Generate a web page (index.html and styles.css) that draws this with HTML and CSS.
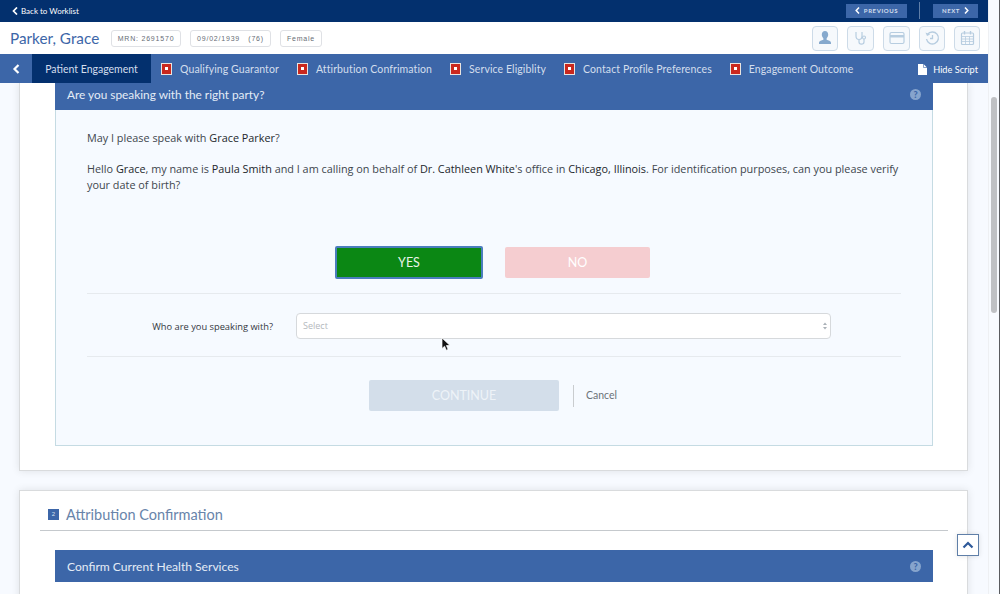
FILE: index.html
```html
<!DOCTYPE html>
<html>
<head>
	<title>Parker, Grace</title>
	<meta charset="UTF-8">
	<link rel="stylesheet" href="styles.css">
</head>
<body>
<div class="window">
	<div class="app">
		<div class="topbar">
			<a class="back"><svg width="6" height="8" viewBox="0 0 6 8"><path d="M5 .5 1.500 4 5 7.500" fill="none" stroke="#fff" stroke-width="1.700"/></svg>Back to Worklist</a>
			<div class="pager">
				<a class="pager-btn prev"><svg width="5" height="7" viewBox="0 0 5 7"><path d="M4 .5 1.200 3.500 4 6.500" fill="none" stroke="#fff" stroke-width="1.500"/></svg>PREVIOUS</a>
				<span class="pager-sep"></span>
				<a class="pager-btn next">NEXT<svg width="5" height="7" viewBox="0 0 5 7"><path d="M1 .5 3.800 3.500 1 6.500" fill="none" stroke="#fff" stroke-width="1.500"/></svg></a>
			</div>
		</div>

		<div class="patient">
			<h1>Parker, Grace</h1>
			<span class="tag tag-mrn">MRN: 2691570</span>
			<span class="tag tag-dob">09/02/1939 &nbsp; (76)</span>
			<span class="tag tag-sex">Female</span>
			<div class="tools">
				<a class="tool tool-a"><svg width="16" height="16" viewBox="0 0 16 16"><path d="M8 1c2 0 3.200 1.500 3.200 3.600 0 1.700-.8 3-1.600 3.800v1.300c1.700.6 4.400 1.200 4.400 3v1.300H2v-1.300c0-1.800 2.700-2.400 4.400-3V8.400C5.600 7.600 4.800 6.300 4.800 4.600 4.800 2.500 6 1 8 1z" fill="#86a9cd"/></svg></a>
				<a class="tool tool-b"><svg width="16" height="16" viewBox="0 0 16 16"><path d="M3 2v4c0 2.300 1.500 3.500 3 3.500S9 8.300 9 6V2M6 9.500V12c0 1.400 1 2.200 2.400 2.200s2.600-.8 2.600-2.200V9" fill="none" stroke="#b7cde0" stroke-width="1.200"/><circle cx="11" cy="7.500" r="1.500" fill="none" stroke="#b7cde0" stroke-width="1.100"/></svg></a>
				<a class="tool tool-c"><svg width="16" height="14" viewBox="0 0 16 14"><rect x="1" y="1.500" width="14" height="11" rx="1.500" fill="none" stroke="#b7cde0" stroke-width="1.200"/><rect x="1" y="4" width="14" height="2.500" fill="#b7cde0"/></svg></a>
				<a class="tool tool-d"><svg width="16" height="16" viewBox="0 0 16 16"><path d="M3.500 4.500A6 6 0 1 1 2.500 9" fill="none" stroke="#b7cde0" stroke-width="1.400"/><path d="M1.500 2.500 3 6l3.200-1.400z" fill="#b7cde0"/><path d="M8.500 5v3.500H6" fill="none" stroke="#b7cde0" stroke-width="1.300"/></svg></a>
				<a class="tool tool-e"><svg width="15" height="16" viewBox="0 0 15 16"><rect x="1.500" y="3" width="12" height="11.500" rx="1" fill="none" stroke="#b7cde0" stroke-width="1.200"/><path d="M4.500 1v3.500M10.500 1v3.500" stroke="#b7cde0" stroke-width="1.400"/><path d="M1.500 6.500h12M1.500 9h12M1.500 11.500h12M5.500 6.500v8M9.500 6.500v8" stroke="#b7cde0" stroke-width=".8"/></svg></a>
			</div>
		</div>

		<nav class="steps">
			<a class="steps-toggle"><svg width="8" height="10" viewBox="0 0 8 10"><path d="M6.500 1 2.500 5l4 4" fill="none" stroke="#fff" stroke-width="2.200"/></svg></a>
			<a class="step active">Patient Engagement</a>
			<a class="step"><i class="flag"></i>Qualifying Guarantor</a>
			<a class="step"><i class="flag"></i>Attirbution Confrimation</a>
			<a class="step"><i class="flag"></i>Service Eligiblity</a>
			<a class="step"><i class="flag"></i>Contact Profile Preferences</a>
			<a class="step"><i class="flag"></i>Engagement Outcome</a>
			<a class="hide-script"><svg width="9" height="11" viewBox="0 0 9 11"><path d="M0 0h5.500L9 3.500V11H0z" fill="#fff"/><path d="M5.500 0v3.500H9" fill="none" stroke="#3c66a8" stroke-width=".6"/></svg>Hide Script</a>
		</nav>

		<div class="content">
			<section class="card card-first">
				<div class="panel">
					<div class="panel-head">
						<span>Are you speaking with the right party?</span>
						<i class="help">?</i>
					</div>
					<div class="panel-body">
						<p>May I please speak with <b>Grace Parker</b>?</p>
						<p>Hello <b>Grace</b>, my name is <b>Paula Smith</b> and I am calling on behalf of <b>Dr. Cathleen White</b>'s office in <b>Chicago, Illinois</b>. For identification purposes, can you please verify your date of birth?</p>
						<div class="answers">
							<button class="btn btn-yes">YES</button>
							<button class="btn btn-no">NO</button>
						</div>
						<div class="who">
							<label>Who are you speaking with?</label>
							<div class="select">
								<span>Select</span>
								<svg width="4" height="8" viewBox="0 0 5 9"><path d="M2.500 0 5 3.400H0zM2.500 9 0 5.600h5z" fill="#aab1b8"/></svg>
							</div>
						</div>
						<div class="actions">
							<button class="btn btn-continue">CONTINUE</button>
							<span class="actions-sep"></span>
							<a class="cancel">Cancel</a>
						</div>
					</div>
				</div>
			</section>

			<section class="card card-second">
				<div class="section-title">
					<i class="num">2</i>
					<h2>Attribution Confirmation</h2>
				</div>
				<div class="panel-head">
					<span>Confirm Current Health Services</span>
					<i class="help">?</i>
				</div>
			</section>

			<a class="to-top"><svg width="12" height="8" viewBox="0 0 12 8"><path d="M1.500 6.500 6 2l4.500 4.500" fill="none" stroke="#2f5a9a" stroke-width="2.200"/></svg></a>
		</div>
	</div>
	<div class="scrollbar"><div class="thumb"></div></div>
</div>

<svg class="cursor" width="10" height="15" viewBox="0 0 10 15"><path d="M1 1v10.500l2.600-2.300 1.700 4 1.800-.8-1.700-3.900H9z" fill="#111" stroke="#fff" stroke-width=".7"/></svg>
</body>
</html>
```

FILE: styles.css
```css
* {
	box-sizing: border-box;
}

body {
	margin: 0;
	height: 594px;
	overflow: hidden;
	position: relative;
	font-family: "Lato", sans-serif;
	background-color: #f7faff;
}

.window {
	display: flex;
	height: 594px;
}

.app {
	width: 988px;
	display: flex;
	flex-direction: column;
}

/* Top bar */
.topbar {
	height: 22px;
	flex: none;
	background-color: #03306e;
	display: flex;
	align-items: center;
	justify-content: space-between;
	padding: 0 10px 1px 12px;
}

.back {
	color: #fff;
	font-size: 8px;
	display: flex;
	align-items: center;
	gap: 3px;
}

.pager {
	display: flex;
	align-items: center;
}

.pager-btn {
	height: 14px;
	background-color: #3c66a8;
	color: #d3deed;
	font-size: 6px;
	font-weight: 700;
	letter-spacing: .6px;
	display: flex;
	align-items: center;
	justify-content: center;
	gap: 4px;
}

.prev {
	width: 61px;
}

.next {
	width: 45px;
}

.pager-sep {
	width: 1px;
	height: 17px;
	background-color: #5f7ea8;
	margin: 0 13px 0 12px;
}

/* Patient header */
.patient {
	height: 32px;
	flex: none;
	background-color: #fff;
	display: flex;
	align-items: center;
	padding: 0 8px 0 10px;
}

.patient h1 {
	margin: 0 11px 0 0;
	font-size: 15.300px;
	font-weight: 400;
	color: #3c66a8;
	white-space: nowrap;
	width: 90px;
}

.tag {
	height: 17px;
	border: 1px solid #dfe1e5;
	border-radius: 3px;
	font-family: "Liberation Sans", sans-serif;
	font-size: 7px;
	letter-spacing: .8px;
	color: #666d75;
	display: flex;
	align-items: center;
	justify-content: center;
	margin-right: 9px;
	white-space: nowrap;
}

.tag-mrn {
	width: 70px;
}

.tag-dob {
	width: 81px;
}

.tag-sex {
	width: 42px;
}

.tools {
	margin-left: auto;
	display: flex;
	gap: 9px;
}

.tool {
	width: 26px;
	height: 25px;
	border: 1px solid #cddbe8;
	border-radius: 4px;
	background-color: #f6f9fc;
	display: flex;
	align-items: center;
	justify-content: center;
}

.tool-b,
.tool-c {
	width: 27px;
}

/* Step nav */
.steps {
	height: 29px;
	flex: none;
	background-color: #3c66a8;
	display: flex;
	align-items: stretch;
	color: #d3deed;
	font-size: 10.500px;
	letter-spacing: .1px;
}

.steps-toggle {
	width: 32px;
	display: flex;
	align-items: center;
	justify-content: center;
}

.step {
	display: flex;
	align-items: center;
	white-space: nowrap;
	margin-right: 18px;
}

.step.active {
	width: 119px;
	background-color: #03306e;
	justify-content: center;
	margin-right: 10px;
	letter-spacing: 0;
}

.flag {
	width: 11px;
	height: 12px;
	background-color: #c9281e;
	border: 1px solid #e9e4e0;
	margin-right: 8px;
	position: relative;
	flex: none;
}

.flag::after {
	content: "";
	position: absolute;
	left: 3px;
	top: 3.500px;
	width: 3px;
	height: 3px;
	background-color: #fff;
}

.hide-script {
	margin-left: auto;
	padding: 1px 10px 0 0;
	display: flex;
	align-items: center;
	gap: 6px;
	color: #fff;
	font-size: 9.200px;
	letter-spacing: 0;
}

/* Content */
.content {
	flex: 1;
	padding: 0 20px 0 19px;
	position: relative;
	overflow: hidden;
}

.card {
	background-color: #fff;
	border: 1px solid #d9dbdd;
	box-shadow: 0 0 8px rgba(0, 0, 0, .1);
	padding: 0 34px 0 35px;
}

.card-first {
	border-top: none;
	height: 388px;
}

.card-second {
	margin-top: 19px;
	height: 140px;
}

.panel {
	height: 363px;
	border: 1px solid #c5dbe3;
	border-top: none;
	background-color: #f6faff;
}

.panel-head {
	height: 32px;
	background-color: #3c66a8;
	color: #e4ecf6;
	font-size: 12.100px;
	display: flex;
	align-items: center;
	justify-content: space-between;
	padding: 0 12px;
}

.panel > .panel-head {
	height: 27px;
	margin: 0 -1px;
	padding-bottom: 4px;
	font-size: 11.850px;
}

.help {
	width: 11px;
	height: 11px;
	border-radius: 50%;
	background-color: #86a4cd;
	color: #3c66a8;
	font-size: 9px;
	font-style: normal;
	font-weight: 900;
	line-height: 11px;
	text-align: center;
}

.panel-body {
	padding: 20px 31px 0;
	font-family: "Open Sans", sans-serif;
	font-size: 10.850px;
	line-height: 16px;
	color: #40464d;
}

.panel-body p {
	margin: 0 0 15px;
}

.panel-body b {
	font-weight: 500;
	color: #23272b;
}

.answers {
	margin-top: 53px;
	padding: 0 0 14px 248px;
	display: flex;
	align-items: center;
	gap: 22px;
	border-bottom: 1px solid #e6eaee;
}

.btn {
	border: none;
	border-radius: 2px;
	font-family: "Lato", sans-serif;
	font-size: 12.500px;
	color: #fff;
	padding: 0;
}

.btn-yes {
	width: 148px;
	height: 33px;
	background-color: #0b8714;
	border: 2px solid #4a7dbd;
	color: #e8f3e8;
}

.btn-no {
	width: 145px;
	height: 31px;
	background-color: #f5cdd0;
}

.who {
	height: 63px;
	padding-top: 2px;
	display: flex;
	align-items: center;
	border-bottom: 1px solid #e6eaee;
}

.who label {
	width: 186px;
	text-align: right;
	font-size: 9.300px;
	font-weight: 500;
	color: #33383e;
	margin-top: 1px;
}

.select {
	width: 535px;
	height: 26px;
	margin-left: 23px;
	background-color: #fff;
	border: 1px solid #d6d9dc;
	border-radius: 4px;
	display: flex;
	align-items: center;
	justify-content: space-between;
	padding: 0 3px 0 6px;
	color: #b4b8bd;
	font-size: 9px;
}

.actions {
	margin-top: 23px;
	padding-left: 282px;
	display: flex;
	align-items: center;
}

.btn-continue {
	width: 190px;
	height: 31px;
	background-color: #d3deea;
	color: #eef3f8;
}

.actions-sep {
	width: 1px;
	height: 22px;
	background-color: #c9cccf;
	margin: 0 12px 0 14px;
}

.cancel {
	font-family: "Lato", sans-serif;
	font-size: 10.500px;
	color: #6c7278;
	margin-bottom: 1px;
}

.section-title {
	height: 40px;
	margin: 0 -15px 19px;
	padding: 7px 0 0 8px;
	border-bottom: 1px solid #c5c9cd;
	display: flex;
	align-items: center;
	gap: 7px;
}

.num {
	width: 11px;
	height: 11px;
	background-color: #3c66a8;
	color: #d9e3f0;
	font-family: "Liberation Sans", sans-serif;
	font-size: 6px;
	font-style: normal;
	line-height: 11px;
	text-align: center;
}

.section-title h2 {
	margin: 0;
	font-size: 14.500px;
	font-weight: 400;
	color: #6884aa;
}

.to-top {
	position: absolute;
	left: 957px;
	top: 451px;
	width: 22px;
	height: 22px;
	background-color: #fff;
	border: 1px solid #5f7fa8;
	box-shadow: 0 0 5px rgba(0, 0, 0, .12);
	display: flex;
	align-items: center;
	justify-content: center;
}

/* Scrollbar */
.scrollbar {
	width: 12px;
	background-color: #f8fbff;
	border-left: 1px solid #eef0f3;
	border-right: 1px solid #5a5c60;
	padding: 97px 2px 0 2px;
}

.thumb {
	height: 216px;
	border-radius: 3px;
	background-color: #bfc1c4;
}

.cursor {
	position: absolute;
	left: 441px;
	top: 337px;
}
```
